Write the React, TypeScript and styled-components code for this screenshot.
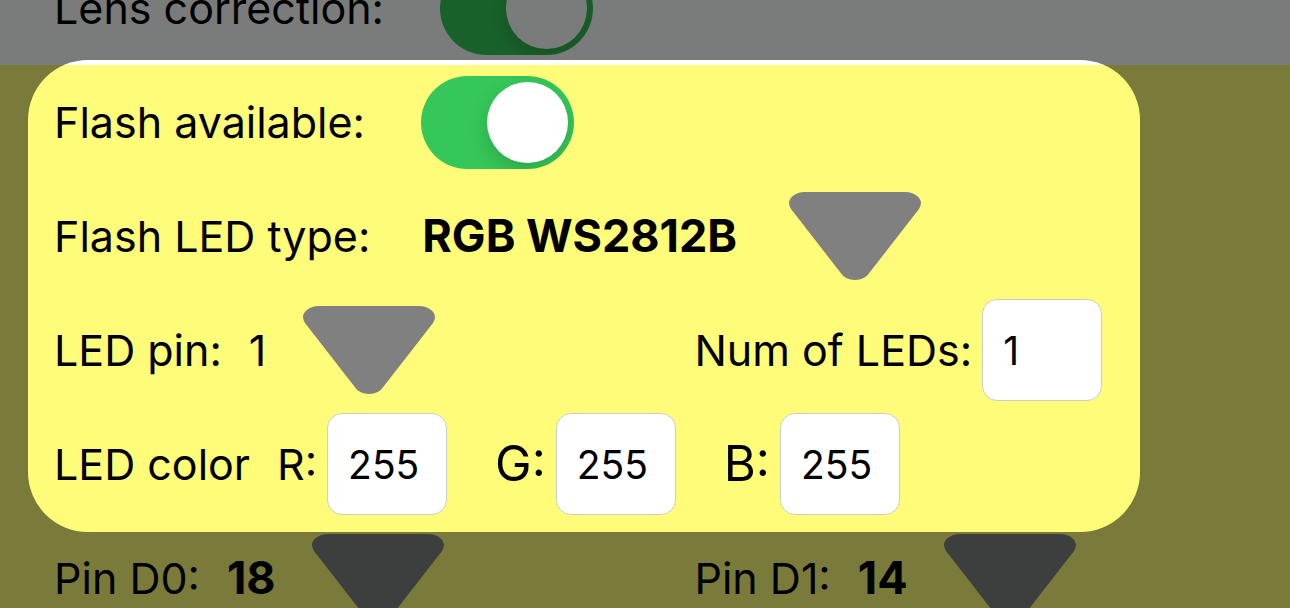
import React, { useId } from "react";
import styled, { createGlobalStyle } from "styled-components";

const GlobalStyle = createGlobalStyle`
  *, *::before, *::after { box-sizing: border-box; }
  body {
    margin: 0;
    background: #fff;
    color: #000;
    font-family: Inter, "Liberation Sans", sans-serif;
    font-size: 43px;
    line-height: 56px;
  }
`;

const Page = styled.main`
  height: 100vh;
  overflow: hidden;
`;

const LensSection = styled.section`
  display: flex;
  flex-direction: column;
  justify-content: flex-end;
  height: 65px;
  overflow: hidden;
`;

const CameraSection = styled.section`
  background: #fffc79;
`;

const FlashGroup = styled.div`
  position: relative;
`;

/* Clear window over the flash settings; its shadow dims the rest of the page. */
const Spotlight = styled.div`
  position: absolute;
  inset: -5px 150px -11px 28px;
  z-index: 1;
  border-radius: 60px;
  box-shadow: 0 0 0 200vmax rgba(0, 3, 1, 0.52);
  pointer-events: none;
`;

const Row = styled.div<{ $split?: boolean; $gap?: number }>`
  display: ${(p) => (p.$split ? "grid" : "flex")};
  grid-template-columns: 57fr 53fr;
  align-items: center;
  gap: ${(p) => p.$gap ?? 0}px;
  flex-shrink: 0;
  height: 114px;
  padding-left: 54px;
  white-space: nowrap;
`;

const Field = styled.div<{ $gap: number }>`
  display: flex;
  align-items: center;
  gap: ${(p) => p.$gap}px;
`;

const Label = styled.label<{ $large?: boolean }>`
  font-size: ${(p) => (p.$large ? 49 : 43)}px;
`;

const Toggle = styled.input`
  appearance: none;
  display: flex;
  justify-content: flex-end;
  width: 153px;
  height: 93px;
  margin: 0;
  padding: 6px;
  overflow: hidden;
  border-radius: 47px;
  background: #c4c4c6;
  &::before {
    content: "";
    width: 81px;
    height: 81px;
    border-radius: 50%;
    background: #fff;
    box-shadow: 0 8px 20px rgba(0, 0, 0, 0.16);
  }
  &:checked { background: #35c759; }
  &:not(:checked) { justify-content: flex-start; }
`;

const Picker = styled.span<{ $gap: number }>`
  display: flex;
  align-items: center;
  gap: ${(p) => p.$gap}px;
`;

const Select = styled.select<{ $bold?: boolean }>`
  appearance: none;
  margin: 0;
  padding: 0;
  border: 0;
  background: none;
  color: inherit;
  font: inherit;
  font-size: ${(p) => (p.$bold ? 45 : 43)}px;
  font-weight: ${(p) => (p.$bold ? 700 : 400)};
`;

const Arrow = styled.svg`
  display: block;
  width: 132px;
  height: 88px;
  fill: #808080;
`;

const NumberBox = styled.input`
  width: 120px;
  height: 102px;
  margin: 0;
  padding: 0 20px;
  border: 1px solid #ccc;
  border-radius: 15px;
  background: #fff;
  color: inherit;
  font-family: inherit;
  font-size: 39px;
`;

function ToggleField({ label, gap }: { label: string; gap: number }) {
  const id = useId();
  return (
    <Field $gap={gap}>
      <Label htmlFor={id}>{label}</Label>
      <Toggle id={id} type="checkbox" defaultChecked />
    </Field>
  );
}

type SelectFieldProps = {
  label: string;
  value: string;
  gap: number;
  arrowGap: number;
  bold?: boolean;
};

function SelectField({ label, value, gap, arrowGap, bold }: SelectFieldProps) {
  const id = useId();
  return (
    <Field $gap={gap}>
      <Label htmlFor={id}>{label}</Label>
      <Picker $gap={arrowGap}>
        <Select id={id} $bold={bold} defaultValue={value}>
          <option>{value}</option>
        </Select>
        <Arrow viewBox="0 0 132 88" aria-hidden="true">
          <path d="M16 0H116C126 0 132 6 132 11Q132 14 130 17L81 80Q76 88 66 88T51 80L2 17Q0 14 0 11C0 6 6 0 16 0Z" />
        </Arrow>
      </Picker>
    </Field>
  );
}

function NumberField({ label, value, large }: { label: string; value: string; large?: boolean }) {
  const id = useId();
  return (
    <Field $gap={10}>
      <Label htmlFor={id} $large={large}>{label}</Label>
      <NumberBox id={id} type="text" inputMode="numeric" defaultValue={value} />
    </Field>
  );
}

export default function App() {
  return (
    <>
      <GlobalStyle />
      <Page>
        <LensSection>
          <Row>
            <ToggleField label="Lens correction:" gap={56} />
          </Row>
        </LensSection>
        <CameraSection>
          <FlashGroup>
            <Row>
              <ToggleField label="Flash available:" gap={56} />
            </Row>
            <Row>
              <SelectField label="Flash LED type:" value="RGB WS2812B" gap={52} arrowGap={52} bold />
            </Row>
            <Row $split>
              <SelectField label="LED pin:" value="1" gap={27} arrowGap={36} />
              <NumberField label="Num of LEDs:" value="1" />
            </Row>
            <Row $gap={48}>
              <Field $gap={27}>
                <span>LED color</span>
                <NumberField label="R:" value="255" />
              </Field>
              <NumberField label="G:" value="255" large />
              <NumberField label="B:" value="255" large />
            </Row>
            <Spotlight />
          </FlashGroup>
          <Row $split>
            <SelectField label="Pin D0:" value="18" gap={27} arrowGap={36} bold />
            <SelectField label="Pin D1:" value="14" gap={27} arrowGap={36} bold />
          </Row>
        </CameraSection>
      </Page>
    </>
  );
}
